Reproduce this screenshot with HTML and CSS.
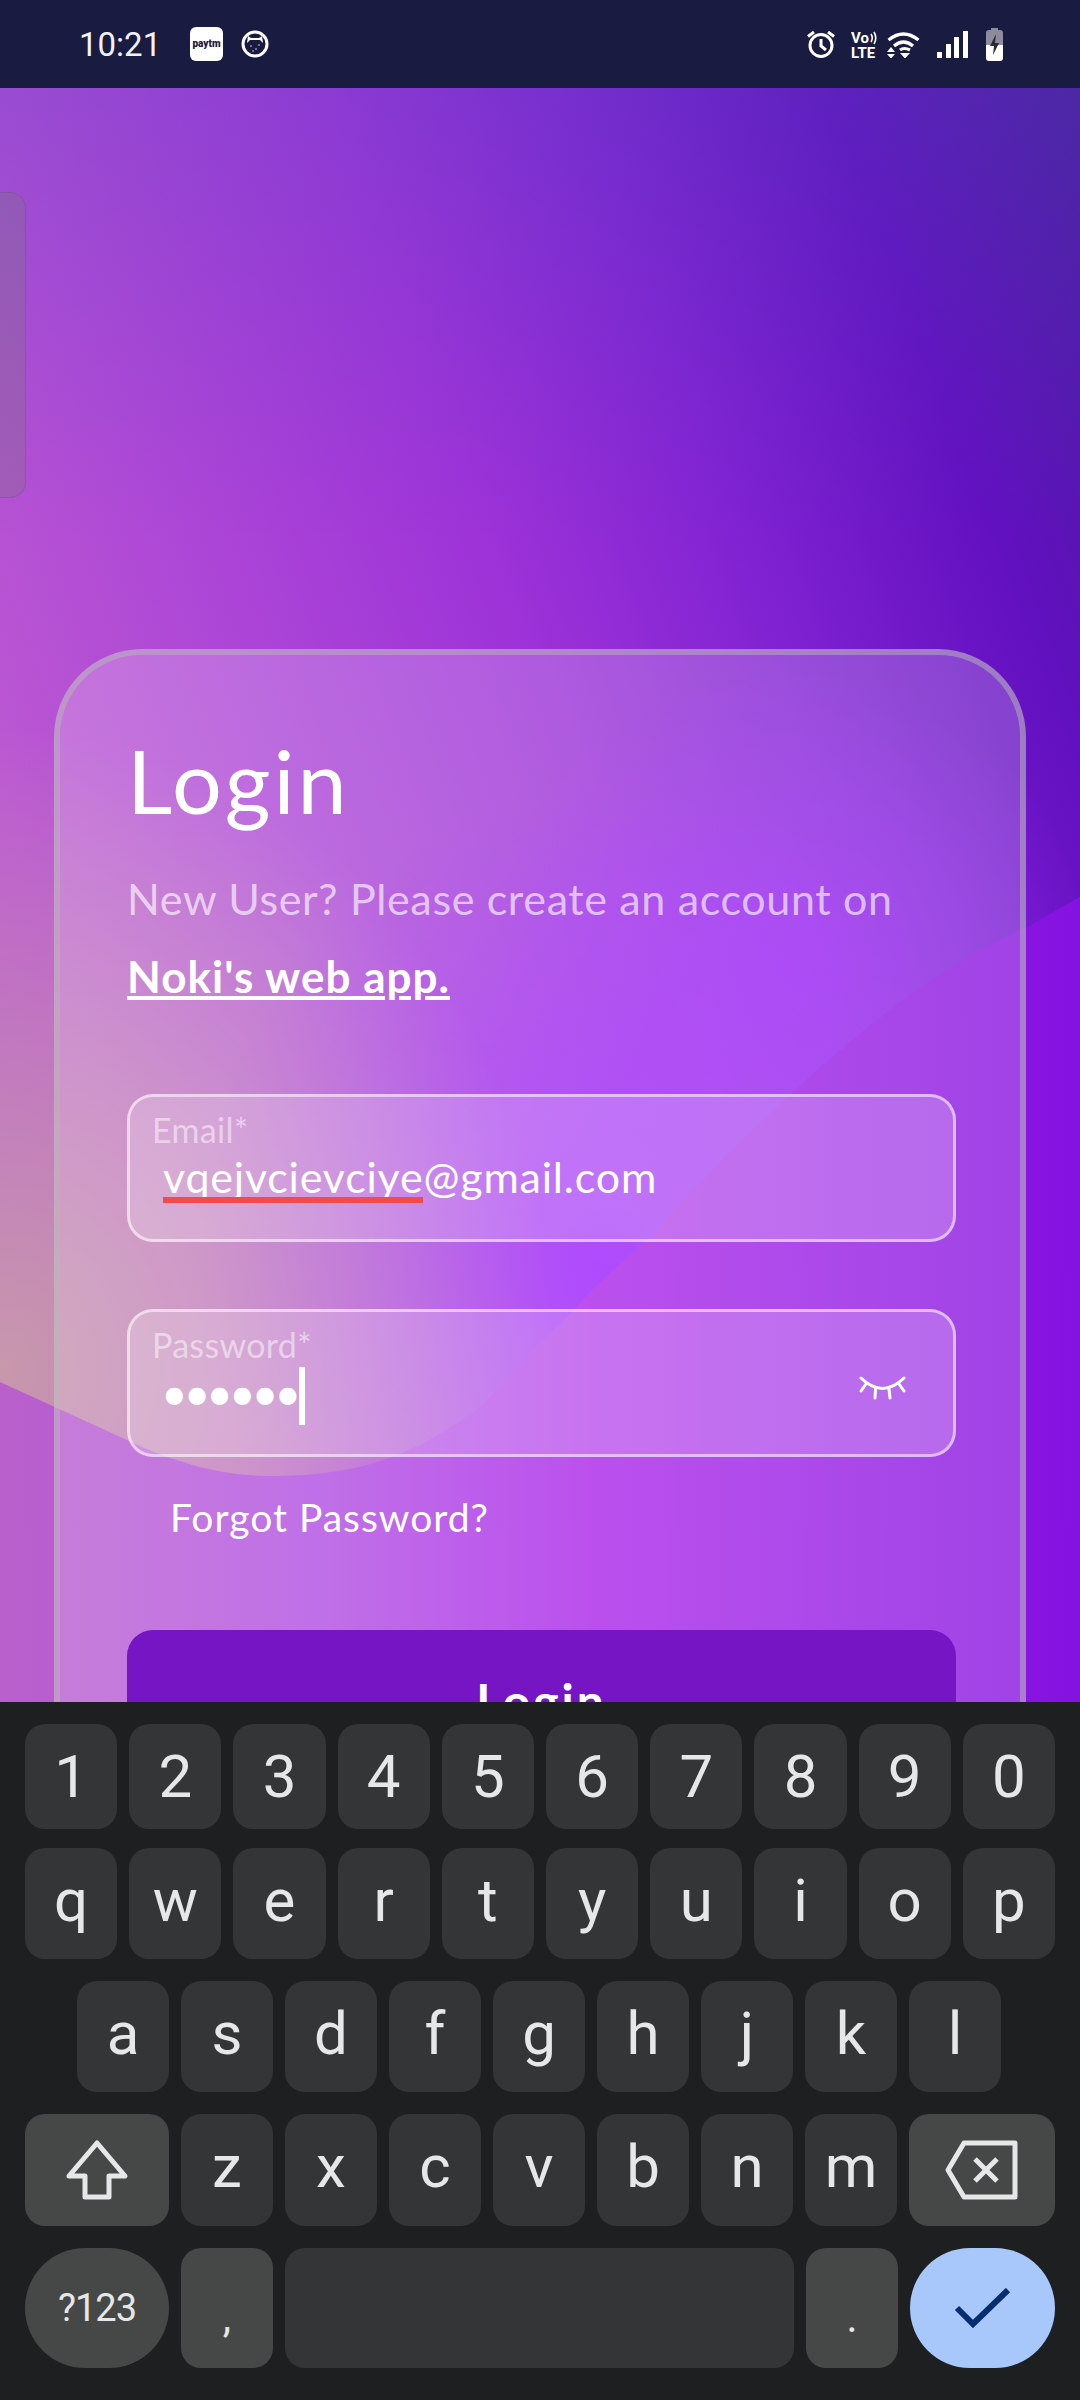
FILE: index.html
```html
<!DOCTYPE html>
<html lang="en">
<head>
  <meta charset="UTF-8">
  <meta name="viewport" content="width=device-width, initial-scale=1.0">
  <title>Login</title>
  <link rel="stylesheet" href="styles.css">
</head>
<body>
  <div class="screen">
    <!-- Status bar -->
    <div class="status-bar">
      <div class="status-left">
        <span class="clock">10:21</span>
        <span class="paytm">paytm</span>
        <svg class="cat-icon" viewBox="0 0 28 28">
          <circle cx="14" cy="14" r="12" fill="none" stroke="#fff" stroke-width="3"/>
          <path d="M7 6 L10 8 H18 L21 6 L22 13 L19 10 H9 L6 13 Z" fill="#fff"/>
          <circle cx="10" cy="16" r="1" fill="#8d8ea6"/>
          <circle cx="15" cy="19" r="1" fill="#8d8ea6"/>
          <circle cx="18" cy="15" r="1" fill="#8d8ea6"/>
          <circle cx="12" cy="21" r="1" fill="#8d8ea6"/>
        </svg>
      </div>
      <div class="status-right">
        <svg class="alarm-icon" viewBox="0 0 28 28">
          <g fill="none" stroke="#fff" stroke-width="3">
            <circle cx="14" cy="15.5" r="11"/>
            <path d="M14 9 V16 L19 20"/>
            <path d="M1 6.5 L7 2"/>
            <path d="M27 6.5 L21 2"/>
          </g>
        </svg>
        <svg class="volte-icon" viewBox="0 -3 26 33">
          <text x="0" y="12" class="volte-text">Vo</text>
          <text x="0" y="27" class="volte-text">LTE</text>
          <path d="M20 3 Q22.5 7 20 11 M23 1 Q26.5 7 23 13" fill="none" stroke="#fff" stroke-width="1.6"/>
        </svg>
        <svg class="wifi-icon" viewBox="0 0 33 27">
          <g fill="none" stroke="#fff" stroke-width="3.2">
            <path d="M1.5 9 Q16.5 -3 31.5 9"/>
            <path d="M7 15 Q16.5 7 26 15"/>
            <path d="M13 19 Q17 16 23 19"/>
          </g>
          <path d="M0 21 L4 16 L8 21 Z M0 23 H8 L4 27.5 Z M13 22 H23 L18 27.5 Z" fill="#fff"/>
        </svg>
        <div class="signal">
          <i class="bar-1"></i><i class="bar-2"></i><i class="bar-3"></i><i class="bar-4"></i>
        </div>
        <svg class="battery-icon" viewBox="0 0 17 33">
          <path d="M5 0 H12 V2 H14 Q17 2 17 5 V17 H0 V5 Q0 2 3 2 H5 Z" fill="#8c8c9e"/>
          <path d="M0 17 H17 V30 Q17 33 14 33 H3 Q0 33 0 30 Z" fill="#fff"/>
          <path d="M10 6 L4 18 H8 L7 27 L13 15 H9 Z" fill="#2a2a33"/>
        </svg>
      </div>
    </div>

    <!-- Page behind the keyboard -->
    <div class="page">
      <div class="side-tab"></div>
      <div class="card">
        <h1 class="card-title">Login</h1>
        <p class="card-note">New User? Please create an account on</p>
        <a class="card-link" href="#">Noki's web app.</a>

        <div class="field field-email">
          <div class="field-body">
            <div class="field-label">Email*</div>
            <div class="field-value"><span class="typo">vqejvcievciye</span><span>@gmail.com</span></div>
          </div>
        </div>

        <div class="field field-password">
          <div class="field-body">
            <div class="field-label">Password*</div>
            <div class="field-value"><span class="dots">••••••</span><span class="caret"></span></div>
          </div>
          <svg class="eye-icon" viewBox="0 0 47 24">
            <g fill="none" stroke="#fff" stroke-width="3" stroke-linecap="round">
              <path d="M2 2 Q23.5 23 45 2"/>
              <path d="M7 8 L2 15"/>
              <path d="M16.5 13 L16 22"/>
              <path d="M30 13 L31 22"/>
              <path d="M40 8 L45 15"/>
            </g>
          </svg>
        </div>

        <div class="forgot">Forgot Password?</div>
        <button class="login-btn">Login</button>
      </div>
    </div>

    <!-- Keyboard -->
    <div class="keyboard">
      <div class="kb-row row-num">
        <div class="key">1</div><div class="key">2</div><div class="key">3</div><div class="key">4</div><div class="key">5</div>
        <div class="key">6</div><div class="key">7</div><div class="key">8</div><div class="key">9</div><div class="key">0</div>
      </div>
      <div class="kb-row row-top">
        <div class="key">q</div><div class="key">w</div><div class="key">e</div><div class="key">r</div><div class="key">t</div>
        <div class="key">y</div><div class="key">u</div><div class="key">i</div><div class="key">o</div><div class="key">p</div>
      </div>
      <div class="kb-row row-mid">
        <div class="key">a</div><div class="key">s</div><div class="key">d</div><div class="key">f</div><div class="key">g</div>
        <div class="key">h</div><div class="key">j</div><div class="key">k</div><div class="key">l</div>
      </div>
      <div class="kb-row row-low">
        <div class="key key-fn key-shift">
          <svg class="kb-icon" width="64" height="62" viewBox="0 0 64 62">
            <path d="M32 4 L60 37 H44 V58 H20 V37 H4 Z" fill="none" stroke="#e6e7e8" stroke-width="5" stroke-linejoin="round"/>
          </svg>
        </div>
        <div class="key">z</div><div class="key">x</div><div class="key">c</div><div class="key">v</div>
        <div class="key">b</div><div class="key">n</div><div class="key">m</div>
        <div class="key key-fn key-back">
          <svg class="kb-icon" width="74" height="60" viewBox="0 0 74 60">
            <path d="M19 3 H70 V57 H19 L3 30 Z" fill="none" stroke="#e6e7e8" stroke-width="5" stroke-linejoin="round"/>
            <path d="M30 19 L52 41 M52 19 L30 41" fill="none" stroke="#e6e7e8" stroke-width="5"/>
          </svg>
        </div>
      </div>
      <div class="kb-row row-bottom">
        <div class="key key-fn key-sym">?123</div>
        <div class="key key-fn key-mark">,</div>
        <div class="key key-space"></div>
        <div class="key key-fn key-mark">.</div>
        <div class="key key-enter">
          <svg class="kb-icon" width="58" height="40" viewBox="0 0 58 40">
            <path d="M3 20 L19 36 L54 2" fill="none" stroke="#062e6f" stroke-width="6"/>
          </svg>
        </div>
      </div>
    </div>
  </div>
</body>
</html>
```

FILE: styles.css
```css
* {
  box-sizing: border-box;
}
body {
  margin: 0;
  font-family: 'Lato', sans-serif;
  color: #fff;
}
.screen {
  width: 1080px;
  height: 2400px;
  display: flex;
  flex-direction: column;
  overflow: hidden;
}

/* status bar */
.status-bar {
  height: 88px;
  flex: none;
  background-color: #1a1b41;
  display: flex;
  justify-content: space-between;
  align-items: center;
  padding: 0 77px 0 79px;
  font-family: 'Roboto', sans-serif;
}
.status-left, .status-right {
  display: flex;
  align-items: center;
}
.clock {
  font-size: 33px;
  width: 111px;
  color: #f2f2f6;
}
.paytm {
  width: 33px;
  height: 34px;
  background-color: #fff;
  border-radius: 6px;
  color: #1a1b41;
  font-size: 10px;
  font-weight: 900;
  text-align: center;
  line-height: 34px;
  margin-right: 18px;
}
.cat-icon {
  width: 28px;
  height: 28px;
}
.alarm-icon {
  width: 28px;
  height: 28px;
  margin-right: 16px;
}
.volte-icon {
  width: 26px;
  height: 33px;
  margin-right: 10px;
}
.volte-text {
  font-size: 15px;
  font-weight: 700;
  fill: #fff;
}
.wifi-icon {
  width: 33px;
  height: 27px;
  margin-right: 17px;
}
.signal {
  width: 31px;
  height: 27px;
  display: flex;
  align-items: flex-end;
  justify-content: space-between;
  margin-right: 18px;
}
.signal i {
  width: 5px;
  background-color: #fff;
}
.bar-1 { height: 6px; }
.bar-2 { height: 14px; }
.bar-3 { height: 21px; }
.bar-4 { height: 27px; }
.battery-icon {
  width: 17px;
  height: 33px;
}

/* page behind keyboard */
.page {
  position: relative;
  height: 1614px;
  flex: none;
  overflow: hidden;
  padding: 561px 54px 0;
  background:
    linear-gradient(180deg, rgba(80, 90, 190, 0.22) 0, rgba(80, 90, 190, 0) 450px),
    radial-gradient(ellipse 560px 640px at 0 1280px, rgba(200, 155, 170, 0.95), rgba(200, 155, 170, 0)),
    radial-gradient(ellipse 400px 480px at 600px 1180px, rgba(156, 29, 255, 0.95), rgba(156, 29, 255, 0)),
    radial-gradient(ellipse 300px 300px at 790px 880px, rgba(156, 29, 255, 0.7), rgba(156, 29, 255, 0)),
    linear-gradient(250deg, #4a1a9e 0%, #6210c0 15%, #8022d2 30%, #9c32d8 45%, #ae48d6 65%, #bb58d2 80%, #bd60d0 100%);
}
/* the darker wave across the bottom of the background */
.page::before {
  content: '';
  position: absolute;
  inset: 0;
  background: linear-gradient(90deg, #ba60cc 0%, #b04ce2 30%, #aa24ea 55%, #8412e0 100%);
  clip-path: path('M0 1294 L127 1352 C190 1382 235 1388 275 1388 C340 1388 395 1374 441 1345 C480 1322 495 1307 516 1279 C535 1257 550 1247 571 1225 C600 1192 625 1172 654 1145 C700 1092 745 1047 792 1005 C870 932 950 872 1026 840 C1045 829 1065 817 1080 809 L1080 1614 L0 1614 Z');
}
.side-tab {
  position: absolute;
  left: -20px;
  top: 104px;
  width: 46px;
  height: 306px;
  border-radius: 16px;
  background-color: rgba(120, 120, 120, 0.3);
  border: 1px solid rgba(110, 80, 140, 0.4);
}
.card {
  position: relative;
  width: 972px;
  height: 1300px;
  padding: 0 64px 0 67px;
  border: 6px solid rgba(195, 195, 195, 0.6);
  border-radius: 88px;
  background-color: rgba(255, 255, 255, 0.2);
  background-clip: padding-box;
}
.card-title {
  margin: 75px 0 0;
  font-size: 88px;
  font-weight: 400;
  line-height: 100px;
  letter-spacing: 3px;
}
.card-note {
  margin: 44px 0 0;
  font-size: 43px;
  line-height: 50px;
  letter-spacing: 0.65px;
  color: rgba(255, 255, 255, 0.65);
}
.card-link {
  display: block;
  margin-top: 27px;
  font-size: 44px;
  line-height: 50px;
  letter-spacing: 1px;
  font-weight: 700;
  color: #fff;
}

.field {
  height: 148px;
  display: flex;
  align-items: center;
  justify-content: space-between;
  padding: 0 47px 0 22px;
  border: 3px solid rgba(255, 255, 255, 0.55);
  border-radius: 26px;
  background-color: rgba(255, 255, 255, 0.2);
}
.field-email {
  margin-top: 93px;
}
.field-password {
  margin-top: 67px;
}
.field-body {
  flex: 1;
  align-self: flex-start;
  padding-top: 14px;
}
.field-label {
  font-size: 34px;
  line-height: 38px;
  letter-spacing: 0.3px;
  color: rgba(255, 255, 255, 0.5);
}
.field-value {
  display: flex;
  align-items: flex-start;
  margin-top: 3px;
  padding-left: 11px;
  font-size: 43px;
  line-height: 50px;
  letter-spacing: 0.8px;
}
.typo {
  height: 51px;
  overflow: hidden;
  border-bottom: 6px solid #f44a4a;
}
.dots {
  margin: 1px 0 0 -2px;
  font-size: 46px;
  letter-spacing: -4px;
}
.caret {
  width: 6px;
  height: 58px;
  margin-left: 2px;
  background-color: #fff;
}
.eye-icon {
  width: 47px;
  height: 24px;
  margin-top: 10px;
}
.forgot {
  margin: 37px 0 0 43px;
  font-size: 39px;
  line-height: 46px;
  letter-spacing: 1px;
}
.login-btn {
  display: block;
  width: 100%;
  height: 140px;
  margin-top: 90px;
  border: none;
  border-radius: 26px;
  background-color: #7515c4;
  color: #fff;
  font-family: 'Lato', sans-serif;
  font-size: 48px;
  font-weight: 700;
  letter-spacing: 3px;
}

/* keyboard */
.keyboard {
  flex: 1;
  background-color: #1e1f21;
  padding-top: 22px;
  font-family: 'Roboto', sans-serif;
}
.kb-row {
  display: flex;
  gap: 12px;
  padding: 0 25px;
  margin-bottom: 22px;
}
.row-num {
  height: 105px;
  margin-bottom: 19px;
}
.row-top, .row-mid {
  height: 111px;
}
.row-low {
  height: 112px;
}
.row-bottom {
  height: 120px;
}
.row-mid {
  padding: 0 79px 0 77px;
}
.key {
  flex: 1;
  display: flex;
  align-items: center;
  justify-content: center;
  background-color: #343537;
  border-radius: 20px;
  color: #e6e7e8;
  font-size: 60px;
  line-height: 60px;
}
.row-top .key, .row-mid .key, .row-low .key {
  padding-bottom: 6px;
}
.key-fn {
  background-color: #464847;
}
.row-low .key-shift {
  flex: none;
  width: 144px;
  padding-bottom: 0;
}
.row-low .key-back {
  flex: none;
  width: 146px;
  padding-bottom: 0;
}
.key-sym {
  flex: none;
  width: 144px;
  border-radius: 60px;
  font-size: 38px;
  letter-spacing: -1px;
}
.key-mark {
  flex: none;
  width: 92px;
  align-items: flex-end;
  padding-bottom: 20px;
  font-size: 42px;
}
.key-enter {
  flex: none;
  width: 145px;
  background-color: #a8c7fa;
  border-radius: 60px;
}
.kb-icon {
  display: block;
}
```
